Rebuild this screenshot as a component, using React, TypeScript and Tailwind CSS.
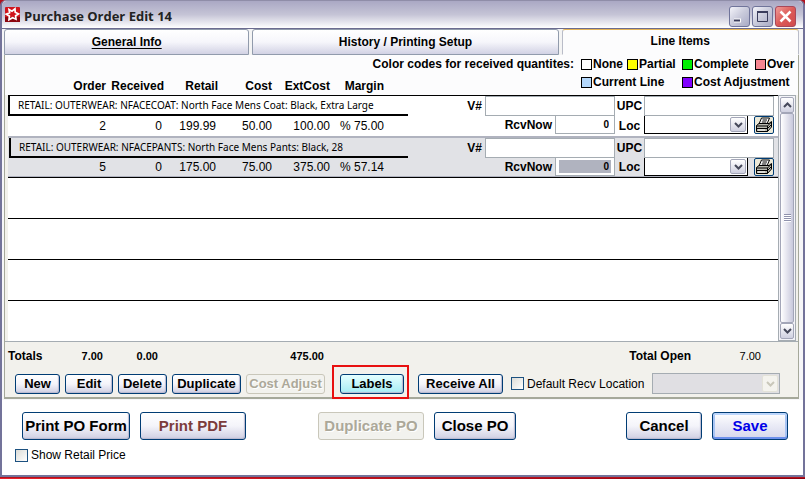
import { useState } from "react";
import type { ReactNode } from "react";

type Line = {
  description: string;
  order: string;
  received: string;
  retail: string;
  cost: string;
  extCost: string;
  margin: string;
  current: boolean;
};

const lines: Line[] = [
  {
    description: "RETAIL: OUTERWEAR: NFACECOAT: North Face Mens Coat: Black, Extra Large",
    order: "2",
    received: "0",
    retail: "199.99",
    cost: "50.00",
    extCost: "100.00",
    margin: "% 75.00",
    current: false,
  },
  {
    description: "RETAIL: OUTERWEAR: NFACEPANTS: North Face Mens Pants: Black, 28",
    order: "5",
    received: "0",
    retail: "175.00",
    cost: "75.00",
    extCost: "375.00",
    margin: "% 57.14",
    current: true,
  },
];

function Chevron({ up = false, color = "#45485a" }: { up?: boolean; color?: string }) {
  return (
    <svg viewBox="0 0 9 6" className="h-[6px] w-[9px]" fill="none" aria-hidden="true">
      <path d={up ? "M1 5 4.5 1.5 8 5" : "M1 1 4.5 4.5 8 1"} stroke={color} strokeWidth="2" />
    </svg>
  );
}

function AppIcon() {
  return (
    <svg viewBox="0 0 15 15" className="h-[15px] w-[15px]" aria-hidden="true">
      <rect width="15" height="15" rx="1" fill="#d0141c" />
      <path d="M0 10h15v5H0z" fill="#8c0710" />
      <path
        d="M4 2.500 7 4.200 10 1.800 10.200 5.200 13.500 7 10.600 8.800 11 12.200 7.600 10.800 4 12.800 4.400 9 1.200 7.200 4.600 5.800z"
        fill="none"
        stroke="#fff"
        strokeWidth="1.7"
      />
    </svg>
  );
}

function Printer() {
  return (
    <svg viewBox="0 0 18 16" className="h-[16px] w-[18px]" aria-hidden="true">
      <path d="M6.500 1h8l-2.500 6H4z" fill="#fff" stroke="#000" />
      <path d="M7.500 3h4.500M6.800 5h4.500" stroke="#000" />
      <path d="M1.500 8.500 4 6.500h10l2.500-2v5.500l-4 4.500h-11z" fill="#b9b9b0" stroke="#000" />
      <path d="M1.500 9h11l4-4M1.500 11.500h11l4-4M12.500 9v5.500" fill="none" stroke="#000" />
      <path d="M3 13h7" stroke="#fff" />
    </svg>
  );
}

function Caption({ label, close = false, children }: { label: string; close?: boolean; children: ReactNode }) {
  return (
    <button
      aria-label={label}
      className={`flex h-[21px] w-[21px] items-center justify-center rounded-[3px] border ${
        close
          ? "border-[#a8485a] bg-linear-to-br from-[#ee9a98] via-[#dc5a58] to-[#d04a4c]"
          : "border-[#70749a] bg-linear-to-br from-[#f4f4fa] via-[#c9cadb] to-[#a9abc6]"
      }`}
    >
      <svg viewBox="0 0 19 19" className="h-[19px] w-[19px]" fill="none" aria-hidden="true">
        {children}
      </svg>
    </button>
  );
}

function Swatch({ color, children, className = "" }: { color: string; children: string; className?: string }) {
  return (
    <span className={`flex items-center gap-px ${className}`}>
      <span className={`h-[11px] w-[11px] shrink-0 border border-black ${color}`} />
      {children}
    </span>
  );
}

function Action({ children, className = "", disabled = false }: { children: string; className?: string; disabled?: boolean }) {
  return (
    <button
      disabled={disabled}
      className={`flex shrink-0 items-center justify-center rounded-[3px] border font-bold whitespace-nowrap ${
        disabled
          ? "border-[#c9c7ba] bg-[#f2f2ee] text-[#aca899] [text-shadow:1px_1px_0_#fff]"
          : "border-[#003c74] shadow-[inset_-1px_-1px_1px_#b8b8d0]"
      } ${className}`}
    >
      {children}
    </button>
  );
}

const face = "bg-linear-to-b from-white via-[#f4f4fa] to-[#cfcfe2]";

function LineRows({ line, index }: { line: Line; index: number }) {
  const bg = line.current ? "bg-[#e1e2e6]" : "bg-white";
  const top = line.current ? "border-t-2 border-[#b0b3bf]" : "border-t border-black";
  const bottom = line.current ? "border-b border-[#b0b3bf]" : "";
  const field = "block w-full border border-[#a5acb2] bg-white px-1 outline-none";
  const shift = line.current ? "pl-px" : "";
  return (
    <>
      <tr className={`${bg} ${line.current ? "h-[22px]" : "h-[21px]"}`}>
        <td colSpan={6} className={`${top} ${shift} align-top`}>
          <div className="h-[20px] border-b-2 border-l-2 border-black pl-2 text-[10px] leading-[18px] whitespace-nowrap font-['Noto_Sans','DejaVu_Sans',sans-serif]">
            {line.description}
          </div>
        </td>
        <td className={`${top} pr-[3px] text-right font-bold`}>
          <label htmlFor={`vendor-${index}`}>V#</label>
        </td>
        <td className={`${top} align-top`}>
          <input id={`vendor-${index}`} className={`${field} h-[20px]`} />
        </td>
        <td className={`${top} text-center font-bold`}>
          <label htmlFor={`upc-${index}`}>UPC</label>
        </td>
        <td className={`${top} pr-1 align-top`}>
          <input id={`upc-${index}`} className={`${field} h-[20px]`} />
        </td>
      </tr>
      <tr className={`${bg} text-right ${line.current ? "h-[19px]" : "h-[20px]"}`}>
        <td className={bottom}>{line.order}</td>
        <td className={`${bottom} pr-[2px]`}>{line.received}</td>
        <td className={`${bottom} pr-[2px]`}>{line.retail}</td>
        <td className={bottom}>{line.cost}</td>
        <td className={bottom}>{line.extCost}</td>
        <td className={`${bottom} pl-[10px] text-left`}>{line.margin}</td>
        <td colSpan={2} className={`${bottom} align-top`}>
          <div className="flex items-center justify-end gap-[3px] font-bold">
            <label htmlFor={`receive-${index}`}>RcvNow</label>
            <div className="h-[18px] w-[60px] border border-t-0 border-[#a5acb2] bg-white px-[3px] py-[2px]">
              <input
                id={`receive-${index}`}
                defaultValue="0"
                className={`block h-[13px] w-full pr-[2px] text-right text-[10px] outline-none ${line.current ? "bg-[#b0b3bf]" : "bg-white"}`}
              />
            </div>
          </div>
        </td>
        <td className={`${bottom} text-center font-bold`}>
          <label htmlFor={`location-${index}`}>Loc</label>
        </td>
        <td className={`${bottom} pr-1 align-top`}>
          <div className="flex items-start justify-between">
            <div className="relative w-[104px]">
              <select
                id={`location-${index}`}
                className="block h-[18px] w-full appearance-none border border-t-0 border-black bg-white outline-none"
              >
                <option></option>
              </select>
              <span className="pointer-events-none absolute top-px right-[2px] flex h-[15px] w-[16px] items-center justify-center rounded-[2px] border border-[#a3a6b8] bg-linear-to-b from-white to-[#cfd0e0]">
                <Chevron />
              </span>
            </div>
            <button
              aria-label="Print line"
              className="flex h-[18px] w-[20px] items-center justify-center rounded-[2px] border border-[#003c74] bg-[#ece9d8]"
            >
              <Printer />
            </button>
          </div>
        </td>
      </tr>
    </>
  );
}

export default function App() {
  const [active, setActive] = useState("Line Items");
  const tab = "h-[26px] rounded-t-[3px] border text-center font-bold";
  const idle = "border-[#919bac] bg-linear-to-b from-white via-[#f6f6fb] to-[#d2d2e4]";
  const current = "border-t-[#e5b456] border-x-[#b9bcc8] border-b-transparent bg-[#fcfcfd] pb-[3px]";

  return (
    <div className="bg-[#b3121d] font-['Liberation_Sans',Arial,sans-serif] text-[12px] leading-[14px] text-black">
      <div className="rounded-t-[6px] border-x-2 border-t border-x-[#73739a] border-t-[#8f8da8] bg-[#f6f6f8]">
        <header className="flex h-[27px] items-center gap-1 rounded-t-[5px] bg-linear-to-b from-[#aaa8c4] via-[#c5c4d6] to-white pr-[7px] pl-[3px]">
          <AppIcon />
          <h1 className="mt-[3px] flex-1 text-[13px] leading-[16px] font-bold text-[#222] font-['Open_Sans','Noto_Sans',sans-serif]">
            Purchase Order Edit 14
          </h1>
          <div className="mt-[3px] flex gap-[2px]">
            <Caption label="Minimize">
              <path d="M4 13.500h7" stroke="#fff" strokeWidth="4" />
              <path d="M4 13.500h6" stroke="#3a3c5c" strokeWidth="2" />
            </Caption>
            <Caption label="Maximize">
              <path d="M4.500 5.500h10v9h-10z" stroke="#3a3c5c" />
              <path d="M4 5h11" stroke="#3a3c5c" strokeWidth="2" />
            </Caption>
            <Caption label="Close" close>
              <path d="m4.500 4.500 10 10M14.500 4.500l-10 10" stroke="#fff" strokeWidth="2.5" />
            </Caption>
          </div>
        </header>

        <div className="border-t border-[#6c6c90] pr-[4px] pl-[2px]">
          <nav role="tablist" className="grid grid-cols-[246fr_307fr_238fr] gap-x-[3px] bg-[#f4f4f4]">
            {["General Info", "History / Printing Setup", "Line Items"].map((name) => (
              <button
                key={name}
                role="tab"
                aria-selected={name === active}
                onClick={() => setActive(name)}
                className={`${tab} ${name === active ? current : idle}`}
              >
                <span className={name === "General Info" ? "underline underline-offset-2" : ""}>{name}</span>
              </button>
            ))}
          </nav>

          <section className="border-x border-b-2 border-[#a5a89a] bg-[#f2f1ec]">
            <div className="flex h-[40px] justify-end gap-[7px] bg-[#fcfcfd] pt-[2px] pr-[2px] font-bold">
              <span>Color codes for received quantites:</span>
              <div className="grid w-[215px] grid-cols-[46px_55px_73px_1fr] content-start gap-y-[4px]">
                <Swatch color="bg-white">None</Swatch>
                <Swatch color="bg-[#ffff00]">Partial</Swatch>
                <Swatch color="bg-[#00f000]">Complete</Swatch>
                <Swatch color="bg-[#f58590]">Over</Swatch>
                <Swatch color="bg-[#b4d8fc]" className="col-span-2">Current Line</Swatch>
                <Swatch color="bg-[#8000ff]" className="col-span-2">Cost Adjustment</Swatch>
              </div>
            </div>

            <div className="-mt-[19px] flex pl-[3px]">
              <table className="min-w-0 flex-1 table-fixed border-separate border-spacing-0">
                <colgroup>
                  <col className="w-[98px]" />
                  <col className="w-[58px]" />
                  <col className="w-[54px]" />
                  <col className="w-[54px]" />
                  <col className="w-[58px]" />
                  <col className="w-[78px]" />
                  <col className="w-[77px]" />
                  <col />
                  <col className="w-[29px]" />
                  <col className="w-[134px]" />
                </colgroup>
                <thead>
                  <tr className="h-[19px] text-right">
                    <th scope="col">Order</th>
                    <th scope="col">Received</th>
                    <th scope="col">Retail</th>
                    <th scope="col">Cost</th>
                    <th scope="col">ExtCost</th>
                    <th scope="col" className="pr-6">Margin</th>
                    <td colSpan={4} />
                  </tr>
                </thead>
                <tbody>
                  {lines.map((line, i) => (
                    <LineRows key={line.description} line={line} index={i} />
                  ))}
                  {[0, 1, 2, 3].map((n) => (
                    <tr key={n} className="h-[41px] bg-white">
                      <td colSpan={10} className="border-t border-black" />
                    </tr>
                  ))}
                </tbody>
              </table>
              <div className="mt-[19px] mr-[2px] flex w-[18px] flex-col border border-[#a5acb2] bg-[#f3f3f8] p-px">
                <button aria-label="Scroll up" className="flex h-[16px] items-center justify-center rounded-[2px] border border-[#a3a6b8] bg-linear-to-b from-white to-[#cfd0e0]">
                  <Chevron up />
                </button>
                <div className="flex flex-1 items-center justify-center rounded-[2px] border border-[#a3a6b8] bg-linear-to-r from-white via-[#e4e4ee] to-[#c8c9dc]">
                  <div className="h-[8px] w-[7px] bg-[repeating-linear-gradient(#8f92ac_0_1px,#ffffff_1px_2px)]" />
                </div>
                <button aria-label="Scroll down" className="flex h-[16px] items-center justify-center rounded-[2px] border border-[#a3a6b8] bg-linear-to-b from-white to-[#cfd0e0]">
                  <Chevron />
                </button>
              </div>
            </div>

            <div className="flex h-[28px] items-center border-t border-[#a5acb2] pl-[3px] text-[11px] font-bold">
              <span className="w-[43px] text-[12px]">Totals</span>
              <span className="w-[52px] text-right">7.00</span>
              <span className="w-[55px] text-right">0.00</span>
              <span className="w-[166px] text-right">475.00</span>
              <span className="ml-auto text-[12px]">Total Open</span>
              <span className="w-[70px] text-right font-normal">7.00</span>
              <span className="w-[37px]" />
            </div>

            <div className="flex items-center pt-[4px] pr-[18px] pb-[3px] pl-[10px] text-[13px]">
              <div className="flex gap-[5px]">
                <Action className={`h-[20px] w-[45px] ${face}`}>New</Action>
                <Action className={`h-[20px] w-[48px] ${face}`}>Edit</Action>
                <Action className={`h-[20px] w-[49px] ${face}`}>Delete</Action>
                <Action className={`h-[20px] w-[69px] ${face}`}>Duplicate</Action>
                <Action disabled className="h-[20px] w-[79px]">Cost Adjust</Action>
              </div>
              <div className="-mt-[12px] -mb-[8px] ml-[7px] border-2 border-[#e81010] pt-[7px] pr-[3px] pb-[3px] pl-[6px]">
                <Action className="h-[20px] w-[64px] bg-linear-to-b from-[#e4ffff] to-[#a4ecf4]">Labels</Action>
              </div>
              <Action className={`ml-[9px] h-[20px] w-[85px] ${face}`}>Receive All</Action>
              <label className="ml-2 flex items-center gap-[3px] text-[12px] whitespace-nowrap">
                <input type="checkbox" className="h-[13px] w-[13px] appearance-none border border-[#1c5180] bg-linear-to-br from-[#dcdcd7] to-white checked:bg-[#1c5180]" />
                Default Recv Location
              </label>
              <div className="relative ml-auto w-[128px]">
                <select disabled aria-label="Default receive location" className="block h-[21px] w-full appearance-none border border-[#a5acb2] bg-[#e0dfe3] opacity-100">
                  <option></option>
                </select>
                <span className="pointer-events-none absolute top-[2px] right-[2px] flex h-[17px] w-[16px] items-center justify-center rounded-[2px] border border-[#e3e2d8] bg-[#f4f3ee]">
                  <Chevron color="#c9c7ba" />
                </span>
              </div>
            </div>
          </section>
        </div>

        <footer className="mt-px border-b-2 border-[#73739a] bg-white pt-3 pr-[15px] pb-[13px] pl-[13px]">
          <div className="flex pl-[7px] text-[15px]">
            <Action className={`h-[28px] w-[108px] ${face}`}>Print PO Form</Action>
            <Action className={`ml-[10px] h-[28px] w-[106px] text-[#7c3c3c] ${face}`}>Print PDF</Action>
            <Action disabled className="ml-[72px] h-[28px] w-[106px]">Duplicate PO</Action>
            <Action className={`ml-[10px] h-[28px] w-[82px] ${face}`}>Close PO</Action>
            <Action className={`ml-auto h-[28px] w-[76px] ${face}`}>Cancel</Action>
            <button className="ml-[10px] h-[28px] w-[76px] rounded-[3px] border border-[#003c74] bg-linear-to-b from-white to-[#d4d6ec] font-bold text-[#0000e8] shadow-[inset_0_-2px_0_#6c90ec,inset_0_2px_0_#bcd6fc,inset_2px_0_0_#a8c4f4,inset_-2px_0_0_#a8c4f4]">
              Save
            </button>
          </div>
          <label className="mt-2 flex w-fit items-center gap-[3px]">
            <input type="checkbox" className="h-[13px] w-[13px] appearance-none border border-[#1c5180] bg-linear-to-br from-[#dcdcd7] to-white checked:bg-[#1c5180]" />
            Show Retail Price
          </label>
        </footer>
      </div>
      <div className="mt-px h-[2px] bg-linear-to-r from-[#e8202a] to-[#8b0010]" />
    </div>
  );
}
